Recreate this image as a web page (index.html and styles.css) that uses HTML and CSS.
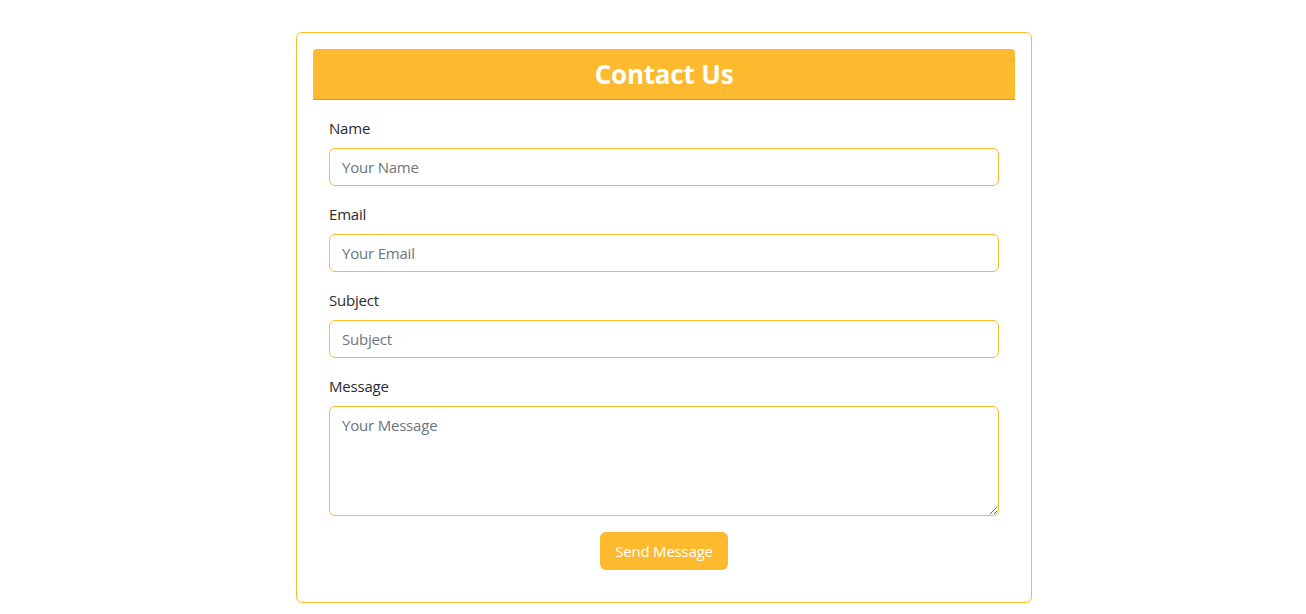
FILE: index.html
```html
<!DOCTYPE html>
<html lang="en">
<head>
<meta charset="utf-8">
<title>Contact Us</title>
<link rel="stylesheet" href="styles.css">
</head>
<body>
<div class="page">
  <div class="card">
    <div class="card-header"><h1>Contact Us</h1></div>
    <form class="form">
      <div class="group">
        <label for="name">Name</label>
        <input id="name" type="text" placeholder="Your Name">
      </div>
      <div class="group">
        <label for="email">Email</label>
        <input id="email" type="email" placeholder="Your Email">
      </div>
      <div class="group">
        <label for="subject">Subject</label>
        <input id="subject" type="text" placeholder="Subject">
      </div>
      <div class="group">
        <label for="message">Message</label>
        <textarea id="message" placeholder="Your Message"></textarea>
      </div>
      <div class="actions">
        <button type="button" class="btn">Send Message</button>
      </div>
    </form>
  </div>
</div>
</body>
</html>
```
FILE: styles.css
```css
* { box-sizing: border-box; }
html, body { margin: 0; padding: 0; background: #fff; }
body {
  font-family: "Open Sans", "Noto Sans", sans-serif;
  font-size: 16px;
  line-height: 1.5;
  color: #212529;
}
.page {
  display: flex;
  justify-content: center;
  padding-top: 32px;
  padding-left: 22px;
}
.card {
  width: 736px;
  border: 1px solid #fdba2f;
  border-radius: 6px;
  padding: 16px;
}
.card-header {
  background: #fdba2f;
  border-bottom: 1px solid #d99a18;
  border-radius: 4px 4px 0 0;
  height: 51px;
  display: flex;
  align-items: center;
  justify-content: center;
}
.card-header h1 {
  margin: 0;
  color: #fff;
  font-size: 26px;
  font-weight: 700;
  line-height: 1;
  letter-spacing: -0.2px;
}
.form {
  padding: 16px;
}
.group {
  display: flex;
  flex-direction: column;
  margin-bottom: 16px;
}
.group label {
  font-size: 15px;
  line-height: 24px;
  margin-bottom: 8px;
  letter-spacing: -0.2px;
  color: #2b2b2b;
}
.group input, .group textarea {
  font-family: inherit;
  font-size: 15px;
  color: #212529;
  border: 1px solid #fdba2f;
  border-radius: 6px;
  padding: 6px 12px;
  height: 38px;
  outline: none;
  letter-spacing: -0.2px;
}
.group textarea {
  height: 110px;
  resize: vertical;
  line-height: 24px;
}
::placeholder { color: #6c757d; opacity: 1; }
.actions {
  display: flex;
  justify-content: center;
}
.btn {
  font-family: inherit;
  font-size: 15px;
  letter-spacing: -0.2px;
  color: #fff;
  background: #fdba2f;
  border: none;
  border-radius: 6px;
  height: 38px;
  padding: 0 12px;
  width: 128px;
}
```
